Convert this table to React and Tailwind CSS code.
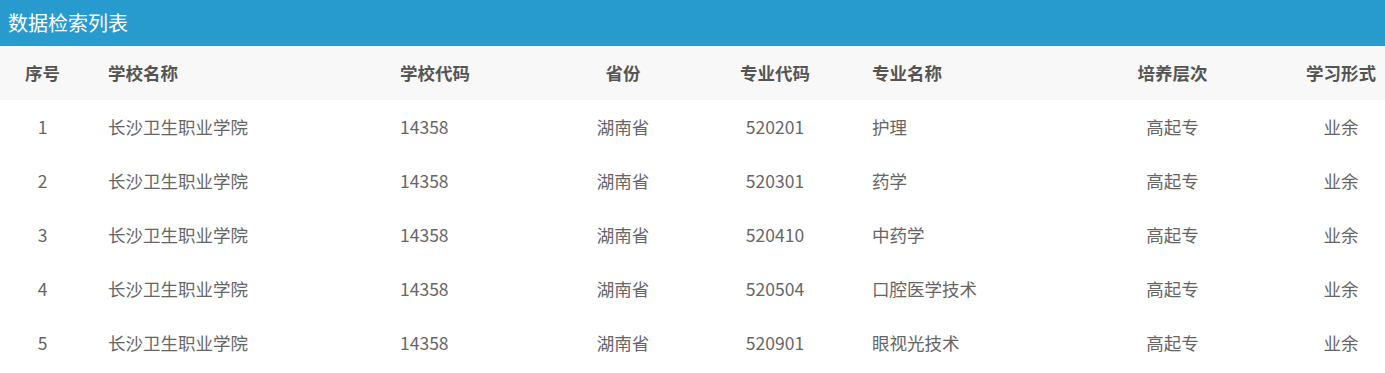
const rows = [
  { no: 1, school: "长沙卫生职业学院", code: "14358", prov: "湖南省", majorCode: "520201", major: "护理", level: "高起专", form: "业余" },
  { no: 2, school: "长沙卫生职业学院", code: "14358", prov: "湖南省", majorCode: "520301", major: "药学", level: "高起专", form: "业余" },
  { no: 3, school: "长沙卫生职业学院", code: "14358", prov: "湖南省", majorCode: "520410", major: "中药学", level: "高起专", form: "业余" },
  { no: 4, school: "长沙卫生职业学院", code: "14358", prov: "湖南省", majorCode: "520504", major: "口腔医学技术", level: "高起专", form: "业余" },
  { no: 5, school: "长沙卫生职业学院", code: "14358", prov: "湖南省", majorCode: "520901", major: "眼视光技术", level: "高起专", form: "业余" },
]

const cols = "grid grid-cols-[85px_292px_171px_150px_154px_196px_249px_88px] items-center"

export default function App() {
  return (
    <div className="w-[1385px] h-[373px] bg-white font-['Microsoft_YaHei','Noto_Sans_CJK_SC',sans-serif]">
      <div className="h-[46px] bg-[#279bcd] flex items-center pl-2 text-white text-[20px]">数据检索列表</div>
      <div className={`${cols} h-[54px] bg-[#f8f8f8] text-[#555] text-[17.5px] font-bold`}>
        <div className="text-center">序号</div>
        <div className="pl-[23px]">学校名称</div>
        <div className="pl-[23px]">学校代码</div>
        <div className="text-center">省份</div>
        <div className="text-center">专业代码</div>
        <div className="pl-5">专业名称</div>
        <div className="text-center">培养层次</div>
        <div className="text-center">学习形式</div>
      </div>
      {rows.map(r => (
        <div key={r.no} className={`${cols} h-[54px] text-[#666] text-[17.5px]`}>
          <div className="text-center">{r.no}</div>
          <div className="pl-[23px]">{r.school}</div>
          <div className="pl-[23px]">{r.code}</div>
          <div className="text-center">{r.prov}</div>
          <div className="text-center">{r.majorCode}</div>
          <div className="pl-5">{r.major}</div>
          <div className="text-center">{r.level}</div>
          <div className="text-center">{r.form}</div>
        </div>
      ))}
    </div>
  )
}
